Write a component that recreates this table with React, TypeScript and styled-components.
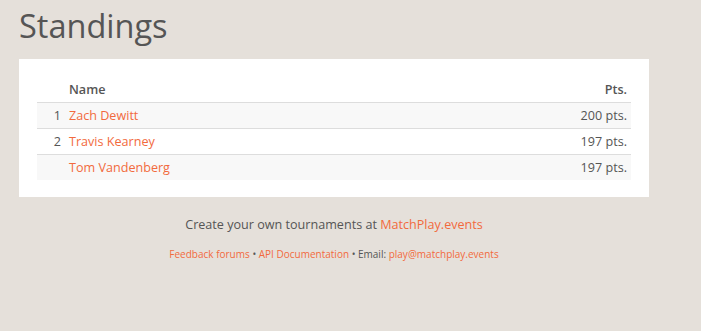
import React from "react";
import styled, { createGlobalStyle } from "styled-components";

const GlobalStyle = createGlobalStyle`
  body {
    margin: 0;
    background: #e5e0da;
    font-family: "Open Sans", "Liberation Sans", sans-serif;
    color: #555;
  }
`;

const Page = styled.div`
  width: 630px;
  padding: 0 19px;
`;

const Title = styled.h1`
  margin: 0;
  padding-top: 4px;
  font-size: 32.5px;
  font-weight: 400;
  line-height: 44px;
  color: #555;
`;

const Card = styled.div`
  margin-top: 11px;
  background: #fff;
  padding: 18px 18px 17px;
`;

const Table = styled.table`
  width: 100%;
  border-collapse: collapse;
  font-size: 12.6px;
`;

const HeadCell = styled.th<{ $right?: boolean }>`
  text-align: ${(p) => (p.$right ? "right" : "left")};
  font-weight: 600;
  color: #555;
  padding: 4px 4px 4px;
  height: 16px;
  border-bottom: 1px solid #ddd;
`;

const Row = styled.tr<{ $striped?: boolean }>`
  background: ${(p) => (p.$striped ? "#f8f8f8" : "#fff")};
`;

const Cell = styled.td<{ $right?: boolean; $rank?: boolean }>`
  text-align: ${(p) => (p.$right || p.$rank ? "right" : "left")};
  padding: 4px;
  height: 17px;
  width: ${(p) => (p.$rank ? "20px" : "auto")};
  color: #555;
  border-top: 1px solid #ddd;
`;

const Link = styled.a`
  color: #f26a3d;
  text-decoration: none;
`;

const Footer = styled.div`
  text-align: center;
  margin-top: 19px;
  font-size: 12.6px;
  color: #555;
`;

const SmallFooter = styled.div`
  text-align: center;
  margin-top: 14px;
  font-size: 10px;
  color: #555;
`;

const players = [
  { rank: "1", name: "Zach Dewitt", pts: 200 },
  { rank: "2", name: "Travis Kearney", pts: 197 },
  { rank: "", name: "Tom Vandenberg", pts: 197 },
];

export default function App() {
  return (
    <>
      <GlobalStyle />
      <Page>
        <Title>Standings</Title>
        <Card>
          <Table>
            <thead>
              <tr>
                <HeadCell></HeadCell>
                <HeadCell>Name</HeadCell>
                <HeadCell $right>Pts.</HeadCell>
              </tr>
            </thead>
            <tbody>
              {players.map((p, i) => (
                <Row key={p.name} $striped={i % 2 === 0}>
                  <Cell $rank>{p.rank}</Cell>
                  <Cell>
                    <Link href="#">{p.name}</Link>
                  </Cell>
                  <Cell $right>{p.pts} pts.</Cell>
                </Row>
              ))}
            </tbody>
          </Table>
        </Card>
        <Footer>
          Create your own tournaments at <Link href="#">MatchPlay.events</Link>
        </Footer>
        <SmallFooter>
          <Link href="#">Feedback forums</Link> • <Link href="#">API Documentation</Link> • Email:{" "}
          <Link href="#">play@matchplay.events</Link>
        </SmallFooter>
      </Page>
    </>
  );
}
